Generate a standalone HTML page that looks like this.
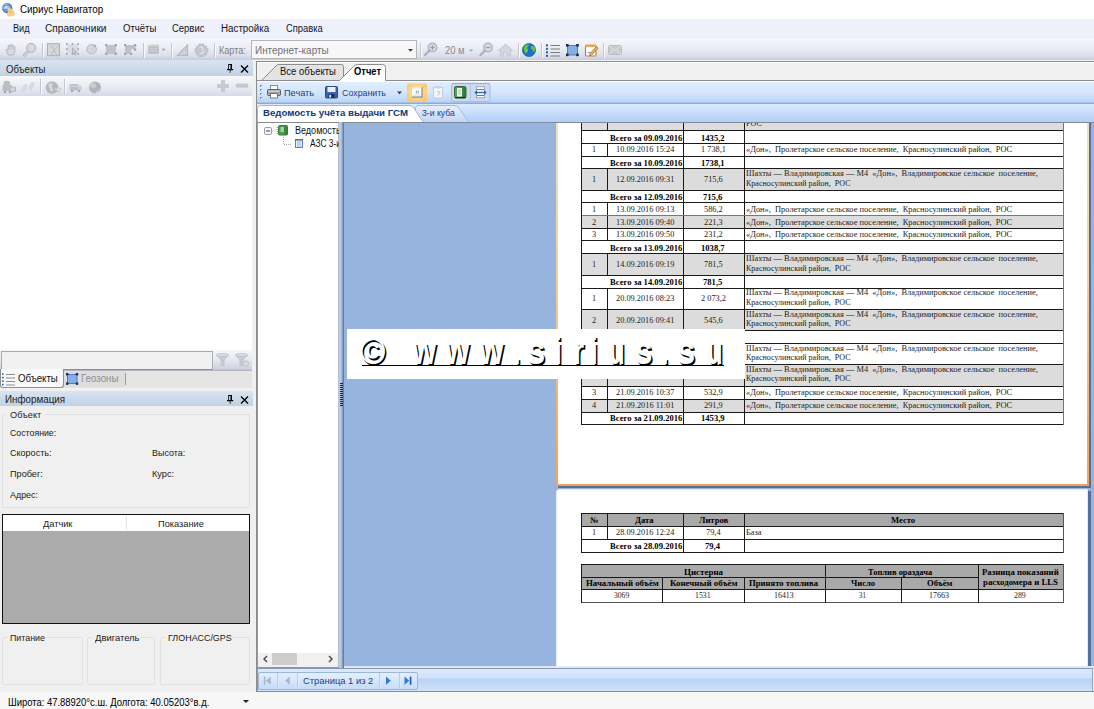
<!DOCTYPE html>
<html><head><meta charset="utf-8"><title>Сириус Навигатор</title>
<style>
*{box-sizing:border-box;margin:0;padding:0}
html,body{width:1094px;height:709px;overflow:hidden;background:#fff}
body{font-family:"Liberation Sans",sans-serif;font-size:11px;color:#000;position:relative}
.a{position:absolute}
.t{position:absolute;white-space:nowrap;line-height:12px;font-size:11px;letter-spacing:-0.2px}
svg{position:absolute;overflow:visible}
#title{left:0;top:0;width:1094px;height:19px;background:#fff}
#menu{left:0;top:19px;width:1094px;height:20px;background:#eef1fa}
#tb{left:0;top:39px;width:1094px;height:21px;background:linear-gradient(#f5f6fb 0,#eceef5 40%,#dde0ea 78%,#d1d5e2 92%,#c3c8d7 97%,#e6e9f0 100%)}
#bodybg{left:0;top:60px;width:1094px;height:649px;background:#f0f0f0}
.phead{background:linear-gradient(#d9e4f2,#c1d1e4);height:16px}
#ltb{left:0;top:76px;width:252px;height:20px;background:linear-gradient(#f8f9fc,#e9ebf3 55%,#d7dae6)}
#llist{left:0;top:96px;width:252px;height:254px;background:#fff}
#rframe{left:256px;top:61px;width:840px;height:631px;background:#f0f0f0;border:1px solid #8c8c8c}
#rtb{left:257px;top:81px;width:837px;height:23px;background:linear-gradient(#fff 0,#fff 1px,#dfedfe 1px,#d5e6fc 50%,#bcd5f6 90%,#7f9fcf 100%)}
#rsub{left:257px;top:104px;width:837px;height:18px;background:linear-gradient(#dbeaff 0,#b3cff6 100%)}
#tree{left:257px;top:123px;width:82px;height:544px;background:#fff;border-left:1px solid #97979c;border-right:1px solid #b9bdcc}
#split{left:339px;top:122px;width:5px;height:546px;background:linear-gradient(90deg,#b4cdec 0,#b4cdec 40%,#a3bbdf 40%,#a3bbdf 60%,#8a9cbb 60%,#8a9cbb 80%,#6c7c9b 80%)}
#view{left:344px;top:123px;width:750px;height:543px;background:#97b4df;overflow:hidden}
#nav{left:257px;top:668px;width:836px;height:23px;background:linear-gradient(#dbe9fd 0,#d0e2fa 42%,#b8d3f5 44%,#c3d9f7 72%,#d2e3fa 100%);border-top:1px solid #8a98b4;border-right:1px solid #8fa5c5}
.rt{position:absolute;font-family:"Liberation Serif",serif;font-size:7.4px;line-height:9px;white-space:nowrap;color:#222}
.rb{font-weight:bold;color:#000}
.hl{position:absolute;height:1px;background:#1a1a1a}
.vl{position:absolute;width:1px;background:#1a1a1a}
.gr{position:absolute;background:#dcdcdc}
.gh{position:absolute;background:#a9a9a9}
.lbl{position:absolute;font-size:11px;letter-spacing:-0.45px;white-space:nowrap;line-height:12px;color:#111}
.gb{position:absolute;border:1px solid #e1e1e1;border-radius:2px}
.wmc{position:absolute;font-weight:bold;font-size:32px;line-height:normal;color:#fff;white-space:pre;transform-origin:0 0}
</style></head><body>
<div class="a" id="title"></div><div class="a" id="menu"></div><div class="a" id="tb"></div><div class="a" id="bodybg"></div>
<svg style="left:1px;top:2px" width="15" height="15" viewBox="0 0 15 15"><defs><radialGradient id="tg" cx="40%" cy="40%" r="65%"><stop offset="0" stop-color="#d7e9fb"/><stop offset=".55" stop-color="#6fa3e0"/><stop offset="1" stop-color="#2f64b4"/></radialGradient></defs><circle cx="6.200" cy="6" r="5.200" fill="url(#tg)"/><path d="M2 4.500c2-1.500 5-2 7.500-.8M1.500 7.500c2 .8 4 .6 5.500-.2" stroke="#3f74c4" stroke-width="1" fill="none" opacity=".8"/><path d="M7 6.200c1-.8 2.200-.3 2.600.6l1.300.3c.8.200 1.300.9 1.500 1.700l1.100 2.300c.5 1-.2 2.200-1.500 2.500l-3.400.5c-1.500.1-2.500-.7-2.600-1.800-.1-1 .5-1.300 1-2 .4-.6-.2-1.600-.4-2.400-.2-.7-.1-1.200.4-1.700z" fill="#f3d394" stroke="#e2b560" stroke-width=".5"/><path d="M8.200 8.200l2.500 1.200M8.500 10.500l2.600.2" stroke="#e6a94a" stroke-width=".7" fill="none"/></svg>
<div class="t" style="left:19.60px;top:3.60px;font-size:10.3px;line-height:12px;letter-spacing:0;color:#000;transform-origin:0 0;transform:scaleX(0.9541);">Сириус Навигатор</div>
<div class="t" style="left:12.70px;top:22.70px;font-size:10px;line-height:12px;letter-spacing:0;color:#16161c;transform-origin:0 0;transform:scaleX(0.9120);">Вид</div>
<div class="t" style="left:44.70px;top:22.70px;font-size:10px;line-height:12px;letter-spacing:0;color:#16161c;transform-origin:0 0;transform:scaleX(1.0152);">Справочники</div>
<div class="t" style="left:122.60px;top:22.70px;font-size:10px;line-height:12px;letter-spacing:0;color:#16161c;transform-origin:0 0;transform:scaleX(0.9542);">Отчёты</div>
<div class="t" style="left:171.90px;top:22.70px;font-size:10px;line-height:12px;letter-spacing:0;color:#16161c;transform-origin:0 0;transform:scaleX(0.9462);">Сервис</div>
<div class="t" style="left:220.70px;top:22.70px;font-size:10px;line-height:12px;letter-spacing:0;color:#16161c;transform-origin:0 0;transform:scaleX(0.9771);">Настройка</div>
<div class="t" style="left:285.50px;top:22.70px;font-size:10px;line-height:12px;letter-spacing:0;color:#16161c;transform-origin:0 0;transform:scaleX(0.9381);">Справка</div>
<svg style="left:0;top:39px" width="640" height="21" viewBox="0 39 640 21"><path d="M8.300 55C7.800 53 6.300 51.600 6.300 50.200C6.300 49 7.600 48.900 8.200 50V46.200C8.200 45.200 9.600 45.200 9.600 46.200L9.800 45.200C9.800 44.200 11.300 44.200 11.300 45.200L11.600 45.500C11.600 44.600 13 44.700 13 45.700L13.300 46.500C13.500 45.800 14.800 46 14.800 47V51C14.800 53 13.800 53.600 13.600 55Z" fill="#d9d9de" stroke="#a8a8b0" stroke-width=".8"/><path d="M9.700 46.500v3M11.400 46v3.500M13.100 46.800v2.800" stroke="#bcbcc4" stroke-width=".6"/><path d="M28.200 51l-3.600 4" stroke="#b0b0b8" stroke-width="3.200" stroke-linecap="round"/><path d="M28.200 51l-3.600 4" stroke="#d8d8dd" stroke-width="1.600" stroke-linecap="round"/><circle cx="31.200" cy="47.900" r="4.500" fill="#d9d9de" stroke="#adadb6" stroke-width="1"/><rect x="47.500" y="43.700" width="12" height="12" fill="#d5d7db" stroke="#adadb4"/><path d="M50.500 45l3.500 5-2.500 5M54 50l4.500-4.500M54 50l3 5" stroke="#bcbec6" fill="none"/><rect x="67" y="44" width="11.500" height="10" fill="#dcdde2"/><g fill="#9b9ca6"><rect x="66" y="43.200" width="1.600" height="1.600"/><rect x="71.700" y="43.200" width="1.600" height="1.600"/><rect x="77.400" y="43.200" width="1.600" height="1.600"/><rect x="66" y="48.200" width="1.600" height="1.600"/><rect x="77.400" y="48.200" width="1.600" height="1.600"/><rect x="66" y="53.200" width="1.600" height="1.600"/><rect x="71.700" y="53.200" width="1.600" height="1.600"/><rect x="77.400" y="53.200" width="1.600" height="1.600"/></g><path d="M72.500 48l4.500 4.300-2 .2 1.100 2.300-1.100.5-1.100-2.300-1.400 1.300z" fill="#c9cad0" stroke="#9d9ea8" stroke-width=".6"/><circle cx="91.600" cy="49.200" r="4.800" fill="#d6d6da" stroke="#babac2"/><path d="M91.600 49.200l3.200-3.200" stroke="#c2c2ca"/><circle cx="95" cy="45.800" r="1.100" fill="#a9a9b2"/><rect x="106" y="45" width="10" height="9" fill="#c2c3ca"/><g fill="#a6a7b0"><rect x="105" y="44" width="2.400" height="2.400"/><rect x="114.600" y="44" width="2.400" height="2.400"/><rect x="105" y="52.600" width="2.400" height="2.400"/><rect x="114.600" y="52.600" width="2.400" height="2.400"/></g><path d="M125 45h10.500v4.500H131v4.500h-6z" fill="#c0c1c8"/><g fill="#a4a5ae"><rect x="124" y="44" width="2.200" height="2.200"/><rect x="134" y="44" width="2.200" height="2.200"/><rect x="134" y="48.500" width="2.200" height="2.200"/><rect x="124" y="52.800" width="2.200" height="2.200"/><rect x="130" y="52.800" width="2.200" height="2.200"/></g><rect x="148" y="45.500" width="11" height="8.500" rx="1" fill="#c1c2c9"/><rect x="150" y="44.500" width="9" height="2" fill="#d0d1d7"/><path d="M149 48.500h9M149 51h9" stroke="#cfd0d6" stroke-width=".7"/><path d="M161.500 48.800h4l-2 2.300z" fill="#9da0ac"/><path d="M177.500 55.500l10-10.500v10.500z" fill="#d0d3db" stroke="#b5b8c2" stroke-width="1.200"/><path d="M182 53.500l3.500-3.700v3.700z" fill="#e4e6ec" stroke="#b5b8c2" stroke-width=".6"/><path d="M199 44h5v2h2.500v2.500H208v4h-1.500V55H204v1.500h-5V55h-2.500v-2.500H195v-4h1.500V46H199z" fill="#c3c6cf" stroke="#b3b6c0" stroke-width=".6"/><path d="M199.500 47.500c2.500-1 4 0 3 1.500s2.500 1.500 1 3.500-3 1-4 .500" stroke="#dfe1e8" stroke-width="1.300" fill="none"/><circle cx="432.500" cy="47.500" r="4.300" fill="#d6d9e1" stroke="#adb0bb" stroke-width="1.300"/><path d="M429.500 50.500l-4.500 4.500" stroke="#adb0bb" stroke-width="2.400" stroke-linecap="round"/><path d="M430.300 47.500h4.400M432.500 45.300v4.400" stroke="#9a9da9" stroke-width="1.200"/><path d="M469 49.500h4.200l-2.100 2.300z" fill="#a6a9b4"/><circle cx="488" cy="47.500" r="4.300" fill="#d6d9e1" stroke="#adb0bb" stroke-width="1.300"/><path d="M485 50.500l-4.500 4.500" stroke="#adb0bb" stroke-width="2.400" stroke-linecap="round"/><path d="M485.800 47.500h4.400" stroke="#9a9da9" stroke-width="1.200"/><path d="M498.500 50.500l7-6.500 7 6.500h-2v5.500h-3.300v-4h-3.400v4h-3.300v-5.500z" fill="#d3d6de" stroke="#c0c3cc" stroke-width=".8"/><circle cx="529" cy="50" r="6.600" fill="#1f6fc2"/><circle cx="529" cy="50" r="6.600" fill="none" stroke="#1558a0" stroke-width=".6"/><path d="M524 47c1-2.500 3.500-3 5-2.300-.2 1.500-1.700 1.500-1.700 3s1.200 1.600.6 3.300-1.400 1.200-1.900 2.800c-1.600-1.300-2.600-4.300-2-6.800z" fill="#63c83c"/><path d="M531 46.500c1.500-1 3.500-.2 4 1.500.3 1.800-.3 3.300-1.200 4.500-.5-1-.3-2-1.300-2.600s-2-1.700-1.500-3.400z" fill="#63c83c"/><g fill="#2c5fb0"><rect x="546" y="44.300" width="2" height="2"/><rect x="546" y="47.800" width="2" height="2"/><rect x="546" y="51.300" width="2" height="2"/><rect x="546" y="54.800" width="2" height="2"/></g><g stroke="#7d7d7d" stroke-width="1"><path d="M550.500 45.500h9.500M550.500 49h9.500M550.500 52.500h9.500M550.500 56h9.500"/></g><rect x="567.500" y="45.500" width="10" height="9.500" fill="#86aee6" stroke="#4b7dcc"/><g fill="#1c2b4a"><rect x="566" y="44" width="2.600" height="2.600"/><rect x="576.200" y="44" width="2.600" height="2.600"/><rect x="566" y="53.600" width="2.600" height="2.600"/><rect x="576.200" y="53.600" width="2.600" height="2.600"/></g><rect x="585.500" y="45.500" width="10.500" height="10.500" rx="1" fill="#fbfbfb" stroke="#b9864a" stroke-width="1.200"/><rect x="585.500" y="44.500" width="10.500" height="2.400" fill="#e9a54a"/><path d="M590 53.500l6.500-7 1.700 1.600-6.500 7-2.300.700z" fill="#f0b050" stroke="#a86a26" stroke-width=".7"/><path d="M587.500 52.500h3" stroke="#999"/><rect x="608.500" y="45.500" width="13" height="9" rx="1" fill="#cbcbce" stroke="#bdbdc2"/><path d="M609 46l6 4.500 6-4.500M609 54l4.500-4M621 54l-4.500-4" stroke="#e4e4e8" fill="none" stroke-width="1"/></svg>
<div class="a" style="left:42px;top:43px;width:1px;height:15px;background:#c3c6d1"></div><div class="a" style="left:43px;top:43px;width:1px;height:15px;background:#fbfbfd"></div>
<div class="a" style="left:143px;top:43px;width:1px;height:15px;background:#c3c6d1"></div><div class="a" style="left:144px;top:43px;width:1px;height:15px;background:#fbfbfd"></div>
<div class="a" style="left:171px;top:43px;width:1px;height:15px;background:#c3c6d1"></div><div class="a" style="left:172px;top:43px;width:1px;height:15px;background:#fbfbfd"></div>
<div class="a" style="left:214px;top:43px;width:1px;height:15px;background:#c3c6d1"></div><div class="a" style="left:215px;top:43px;width:1px;height:15px;background:#fbfbfd"></div>
<div class="a" style="left:420px;top:43px;width:1px;height:15px;background:#c3c6d1"></div><div class="a" style="left:421px;top:43px;width:1px;height:15px;background:#fbfbfd"></div>
<div class="a" style="left:518px;top:43px;width:1px;height:15px;background:#c3c6d1"></div><div class="a" style="left:519px;top:43px;width:1px;height:15px;background:#fbfbfd"></div>
<div class="a" style="left:541px;top:43px;width:1px;height:15px;background:#c3c6d1"></div><div class="a" style="left:542px;top:43px;width:1px;height:15px;background:#fbfbfd"></div>
<div class="a" style="left:603px;top:43px;width:1px;height:15px;background:#c3c6d1"></div><div class="a" style="left:604px;top:43px;width:1px;height:15px;background:#fbfbfd"></div>
<div class="t" style="left:219.30px;top:44.70px;font-size:10px;line-height:12px;letter-spacing:0;color:#7d7d84;transform-origin:0 0;transform:scaleX(0.9107);">Карта:</div>
<div class="a" style="left:251px;top:40px;width:166px;height:19px;background:#f7f7f7;border:1px solid #b5b5b5"></div>
<div class="t" style="left:254.90px;top:44.70px;font-size:10px;line-height:12px;letter-spacing:0;color:#6f6f74;transform-origin:0 0;transform:scaleX(0.9915);">Интернет-карты</div>
<svg style="left:408px;top:49px" width="5" height="3" viewBox="0 0 5 3"><path d="M0 0h5L2.500 2.800z" fill="#444"/></svg>
<div class="t" style="left:445.20px;top:44.70px;font-size:10px;line-height:12px;letter-spacing:0;color:#8a8a92;transform-origin:0 0;transform:scaleX(0.9434);">20 м</div>
<div class="a phead" style="left:0;top:60px;width:253px"></div>
<div class="t" style="left:5.70px;top:63.70px;font-size:10px;line-height:12px;letter-spacing:0;color:#1b1b1b;transform-origin:0 0;transform:scaleX(0.9578);">Объекты</div>
<svg style="left:227px;top:64px" width="7" height="9" viewBox="0 0 7 9"><path d="M1.200 0h3.800v5H6.200v1.200H0V5h1.200z" fill="#000"/><rect x="2.200" y="1" width="1.200" height="4" fill="#fff"/><rect x="2.700" y="6" width="1" height="2.800" fill="#333"/></svg>
<svg style="left:240px;top:65px" width="9" height="8" viewBox="0 0 9 8"><path d="M1 .5l7 7M8 .5l-7 7" stroke="#000" stroke-width="1.300"/></svg>
<div class="a" id="ltb"></div>
<svg style="left:0;top:76px" width="253" height="21" viewBox="0 76 253 21"><path d="M3.500 83c0-3 6.500-3 6.500 0v2h2v6H2.500v-6h1z" fill="#bdbdc4"/><rect x="10" y="87" width="5.500" height="4.500" fill="#d3d3d9" stroke="#b4b4bb" stroke-width=".8"/><circle cx="5" cy="92" r="1.300" fill="#a5a5ad"/><circle cx="10" cy="92" r="1.300" fill="#a5a5ad"/><g fill="#d9dae1"><ellipse cx="24.500" cy="88" rx="2.300" ry="4.300" transform="rotate(25 24.500 88)"/><ellipse cx="31.500" cy="86" rx="2.300" ry="4.300" transform="rotate(25 31.500 86)"/></g><circle cx="52" cy="87.500" r="6.300" fill="#b7b8be"/><path d="M49 84c1.500-1.600 3-1.200 3.500 0s-1 2-.500 3.300 1.700 1.400 1.200 3-2.300 1.300-3-.3-2.300-3.600-1.200-6z" fill="#d8d9de"/><path d="M54.500 88.500h3v-2h1.500v2h2v1.500h-2v2H57.500v-2h-3z" fill="#e8e9ee" stroke="#a9aab1" stroke-width=".4"/><rect x="69.500" y="84" width="9" height="6.500" rx="1" fill="#bfc0c6"/><path d="M78.500 85.500h2.500l1 2v3h-3.500z" fill="#cfd0d6"/><path d="M70 86.200h8" stroke="#dcdde2" stroke-width="1"/><circle cx="72" cy="91" r="1.200" fill="#a9aab1"/><circle cx="79" cy="91" r="1.200" fill="#a9aab1"/><circle cx="95" cy="87.500" r="6" fill="#b3b4ba"/><circle cx="93" cy="85.500" r="3" fill="#c9cad0"/><path d="M96 91l1 2 2.500-3.500" stroke="#d9dadf" stroke-width="1" fill="none"/><path d="M221.500 80.500h3v4h4v3h-4v4h-3v-4h-4v-3h4z" fill="#c9cad1" stroke="#bbbcc4" stroke-width=".6"/><rect x="236" y="84" width="12" height="3.200" rx="1" fill="#c9cad1" stroke="#bbbcc4" stroke-width=".6"/></svg>
<div class="a" style="left:40px;top:79px;width:1px;height:15px;background:#c3c6d1"></div><div class="a" style="left:41px;top:79px;width:1px;height:15px;background:#fbfbfd"></div>
<div class="a" style="left:64px;top:79px;width:1px;height:15px;background:#c3c6d1"></div><div class="a" style="left:65px;top:79px;width:1px;height:15px;background:#fbfbfd"></div>
<div class="a" id="llist"></div>
<div class="a" style="left:0;top:350px;width:252px;height:21px;background:linear-gradient(#f6f7fb,#e4e7ef 50%,#cdd2df 90%,#b9bdcb 96%,#a9a9ae 100%)"></div>
<div class="a" style="left:1px;top:351px;width:212px;height:19px;background:#f1f1f1;border:1px solid #a9a9a9;border-right-color:#b0b0b0;border-bottom-color:#8f8f8f"></div>
<svg style="left:213px;top:350px" width="40" height="20" viewBox="213 350 40 20"><path d="M216.500 355h12l-4.500 5v5.500h-3v-5.500z" fill="#cbccd2" stroke="#b9bac1" stroke-width=".7"/><ellipse cx="222.500" cy="355" rx="6" ry="1.600" fill="#dadbe0" stroke="#b9bac1" stroke-width=".6"/><path d="M235.500 355h12l-4.500 5v5.500h-3v-5.500z" fill="#cbccd2" stroke="#b9bac1" stroke-width=".7"/><ellipse cx="241.500" cy="355" rx="6" ry="1.600" fill="#dadbe0" stroke="#b9bac1" stroke-width=".6"/><circle cx="246" cy="363.500" r="2.600" fill="#dcdde2" stroke="#b4b5bc" stroke-width=".7"/></svg>
<div class="a" style="left:0;top:371px;width:252px;height:17px;background:#e5e5e5"></div>
<div class="a" style="left:64px;top:371px;width:61px;height:16px;background:#dddddd"></div>
<div class="a" style="left:0;top:369px;width:64px;height:19px;background:#fafafa;border:1px solid #8e8e8e;border-top:0;border-radius:0 0 3px 3px"></div>
<svg style="left:0;top:370px" width="130" height="19" viewBox="0 370 130 19"><g fill="#2c5fb0"><rect x="2" y="373.300" width="1.600" height="1.600"/><rect x="2" y="376.800" width="1.600" height="1.600"/><rect x="2" y="380.300" width="1.600" height="1.600"/><rect x="2" y="383.800" width="1.600" height="1.600"/></g><path d="M6 374.500h9M6 378h9M6 381.500h9M6 385h9" stroke="#8a8a8a"/><rect x="67.500" y="374.500" width="9.500" height="9" fill="#86aee6" stroke="#4b7dcc"/><g fill="#1c2b4a"><rect x="66" y="373" width="2.400" height="2.400"/><rect x="75.800" y="373" width="2.400" height="2.400"/><rect x="66" y="382.400" width="2.400" height="2.400"/><rect x="75.800" y="382.400" width="2.400" height="2.400"/></g><path d="M125.500 373v12" stroke="#9a9a9a"/></svg>
<div class="t" style="left:17.80px;top:372.69px;font-size:10px;line-height:12px;letter-spacing:0;color:#111;transform-origin:0 0;transform:scaleX(0.9651);">Объекты</div>
<div class="t" style="left:81.40px;top:372.69px;font-size:10px;line-height:12px;letter-spacing:0;color:#8d8d8d;transform-origin:0 0;transform:scaleX(0.9714);">Геозоны</div>
<div class="a phead" style="left:0;top:391px;width:253px;height:15px"></div>
<div class="t" style="left:5.30px;top:393.69px;font-size:10px;line-height:12px;letter-spacing:0;color:#1b1b1b;transform-origin:0 0;transform:scaleX(0.9816);">Информация</div>
<svg style="left:227px;top:395px" width="7" height="9" viewBox="0 0 7 9"><path d="M1.200 0h3.800v5H6.200v1.200H0V5h1.200z" fill="#000"/><rect x="2.200" y="1" width="1.200" height="4" fill="#fff"/><rect x="2.700" y="6" width="1" height="2.800" fill="#333"/></svg>
<svg style="left:240px;top:395.5px" width="9" height="8" viewBox="0 0 9 8"><path d="M1 .5l7 7M8 .5l-7 7" stroke="#000" stroke-width="1.300"/></svg>
<div class="gb" style="left:2px;top:414px;width:248px;height:94px"></div>
<div class="a" style="left:7px;top:408px;width:37px;height:12px;background:#f0f0f0"></div>
<div class="t" style="left:9.70px;top:408.76px;font-size:9.8px;line-height:12px;letter-spacing:0;color:#1a1a1a;transform-origin:0 0;transform:scaleX(0.9379);">Объект</div>
<div class="t" style="left:9.70px;top:426.76px;font-size:9.8px;line-height:12px;letter-spacing:0;color:#1a1a1a;transform-origin:0 0;transform:scaleX(0.8949);">Состояние:</div>
<div class="t" style="left:9.70px;top:446.76px;font-size:9.8px;line-height:12px;letter-spacing:0;color:#1a1a1a;transform-origin:0 0;transform:scaleX(0.9213);">Скорость:</div>
<div class="t" style="left:9.70px;top:467.76px;font-size:9.8px;line-height:12px;letter-spacing:0;color:#1a1a1a;transform-origin:0 0;transform:scaleX(0.9320);">Пробег:</div>
<div class="t" style="left:9.70px;top:488.76px;font-size:9.8px;line-height:12px;letter-spacing:0;color:#1a1a1a;transform-origin:0 0;transform:scaleX(0.9097);">Адрес:</div>
<div class="t" style="left:152.30px;top:446.76px;font-size:9.8px;line-height:12px;letter-spacing:0;color:#1a1a1a;transform-origin:0 0;transform:scaleX(0.9126);">Высота:</div>
<div class="t" style="left:152.30px;top:467.76px;font-size:9.8px;line-height:12px;letter-spacing:0;color:#1a1a1a;transform-origin:0 0;transform:scaleX(0.9333);">Курс:</div>
<div class="a" style="left:2px;top:514px;width:248px;height:110px;background:#ababab;border:1px solid #111"></div>
<div class="a" style="left:3px;top:515px;width:246px;height:16px;background:#fff"></div>
<div class="a" style="left:126px;top:516px;width:1px;height:14px;background:#e3e3e3"></div>
<div class="t" style="left:43.20px;top:517.76px;font-size:9.8px;line-height:12px;letter-spacing:0;color:#1a1a1a;transform-origin:0 0;transform:scaleX(0.9414);">Датчик</div>
<div class="t" style="left:157.70px;top:517.76px;font-size:9.8px;line-height:12px;letter-spacing:0;color:#1a1a1a;transform-origin:0 0;transform:scaleX(0.9420);">Показание</div>
<div class="gb" style="left:2px;top:637px;width:81px;height:48px"></div>
<div class="a" style="left:8px;top:632px;width:38px;height:12px;background:#f0f0f0"></div>
<div class="t" style="left:10.00px;top:631.76px;font-size:9.8px;line-height:12px;letter-spacing:0;color:#1a1a1a;transform-origin:0 0;transform:scaleX(0.9022);">Питание</div>
<div class="gb" style="left:87px;top:637px;width:68px;height:48px"></div>
<div class="a" style="left:93px;top:632px;width:48px;height:12px;background:#f0f0f0"></div>
<div class="t" style="left:95.40px;top:631.76px;font-size:9.8px;line-height:12px;letter-spacing:0;color:#1a1a1a;transform-origin:0 0;transform:scaleX(0.9624);">Двигатель</div>
<div class="gb" style="left:160px;top:637px;width:90px;height:48px"></div>
<div class="a" style="left:165px;top:632px;width:67px;height:12px;background:#f0f0f0"></div>
<div class="t" style="left:167.80px;top:631.76px;font-size:9.8px;line-height:12px;letter-spacing:0;color:#1a1a1a;transform-origin:0 0;transform:scaleX(0.9143);">ГЛОНАСС/GPS</div>
<div class="a" style="left:0;top:692px;width:1094px;height:17px;background:#f7f7f7"></div>
<div class="t" style="left:7.70px;top:696.70px;font-size:10px;line-height:12px;letter-spacing:0;color:#000;transform-origin:0 0;transform:scaleX(0.9445);">Широта: 47.88920°с.ш. Долгота: 40.05203°в.д.</div>
<svg style="left:243px;top:700px" width="6" height="3" viewBox="0 0 6 3"><path d="M0 0h6L3 3z" fill="#222"/></svg>
<div class="a" id="rframe"></div>
<div class="a" style="left:257px;top:62px;width:837px;height:1px;background:#fff"></div>
<div class="a" style="left:257px;top:80px;width:837px;height:1px;background:#8c8c8c"></div>
<svg style="left:257px;top:62px" width="140" height="20" viewBox="257 62 140 20"><path d="M261.500 80.500L277.500 64.500H341.500Q343.500 64.500 343.500 66.500V80.500z" fill="#e3e3e3" stroke="#8c8c8c"/><path d="M339.500 80.500L353.500 66.500Q355.500 64.500 357.500 64.500H382.500Q385.500 64.500 385.500 67.500V81.500H339z" fill="#ffffff"/><path d="M339.500 80.500L353.500 66.500Q355.500 64.500 357.500 64.500H382.500Q385.500 64.500 385.500 67.500V80.500" fill="none" stroke="#8c8c8c"/></svg>
<div class="t" style="left:280.40px;top:65.70px;font-size:10px;line-height:12px;letter-spacing:0;color:#111;transform-origin:0 0;transform:scaleX(0.9452);">Все объекты</div>
<div class="t" style="left:354.40px;top:65.70px;font-size:10px;line-height:12px;letter-spacing:0;font-weight:bold;color:#000;transform-origin:0 0;transform:scaleX(0.9372);">Отчет</div>
<div class="a" id="rtb"></div>
<div class="a" id="rsub"></div>
<svg style="left:257px;top:81px" width="260" height="23" viewBox="257 81 260 23"><rect x="260" y="85" width="2" height="2" fill="#6f93c6"/><rect x="261" y="86" width="1" height="1" fill="#fff"/><rect x="260" y="89" width="2" height="2" fill="#6f93c6"/><rect x="261" y="90" width="1" height="1" fill="#fff"/><rect x="260" y="93" width="2" height="2" fill="#6f93c6"/><rect x="261" y="94" width="1" height="1" fill="#fff"/><rect x="260" y="97" width="2" height="2" fill="#6f93c6"/><rect x="261" y="98" width="1" height="1" fill="#fff"/><rect x="270.500" y="85.500" width="7" height="4" fill="#fff" stroke="#777" stroke-width=".8"/><rect x="267.500" y="89.500" width="13" height="6" rx="1" fill="#a4a4aa" stroke="#55555b" stroke-width=".9"/><rect x="270.500" y="93.500" width="7" height="4.500" fill="#fff" stroke="#5d5d63" stroke-width=".8"/><rect x="268.500" y="90.500" width="11" height="1.300" fill="#d4d4d8"/><rect x="277" y="92.200" width="1.500" height="1.200" fill="#7fd06a"/><rect x="325.500" y="86.500" width="12" height="11.500" rx="1" fill="#3a63b8" stroke="#23407f" stroke-width=".9"/><rect x="327.500" y="87" width="8" height="5" fill="#e9eef8"/><rect x="328.500" y="94" width="6" height="4" fill="#1c2f66"/><rect x="329.300" y="94.800" width="1.800" height="2.800" fill="#dfe6f5"/><path d="M397 91.500h5l-2.500 2.700z" fill="#2a3a5c"/><defs><radialGradient id="og" cx="50%" cy="45%" r="65%"><stop offset="0" stop-color="#fee6b6"/><stop offset="1" stop-color="#f9c468"/></radialGradient><linearGradient id="gb" x1="0" y1="0" x2="1" y2="0"><stop offset="0" stop-color="#58a85a"/><stop offset="1" stop-color="#2f7a36"/></linearGradient></defs><rect x="407" y="83.500" width="20" height="18" rx="2" fill="url(#og)"/><rect x="412" y="87" width="10.500" height="10.500" fill="#6f7684"/><rect x="412" y="87" width="9.500" height="9.500" fill="#fdfdfd"/><rect x="412" y="87" width="9.500" height="1.600" fill="#e3e6ec"/><path d="M416.300 90.500v3M418.300 90.500v3" stroke="#8b93a5" stroke-width="1"/><path d="M413.500 95h6.500" stroke="#c8ccd6" stroke-width=".8"/><rect x="433.500" y="87.500" width="9" height="10.500" fill="#f6f7f9" stroke="#c3c8d2" stroke-width=".9"/><rect x="435.500" y="86" width="5" height="2.400" rx="1" fill="#cfd3db"/><rect x="451.500" y="83.500" width="38.500" height="18" rx="2" fill="#cbdaf0" stroke="#a9bddb"/><path d="M452.500 83.500h36.500" stroke="#8fa6c8" stroke-dasharray="1.500 1"/><path d="M470.500 84.500v16" stroke="#b4c6e0"/><rect x="454.500" y="86.500" width="11.500" height="11.500" rx="1.500" fill="url(#gb)" stroke="#2c5f32" stroke-width=".9"/><rect x="457" y="88" width="5" height="8.500" fill="#f4f7f3"/><path d="M458 90h3M458 92h3M458 94h3" stroke="#9aa89b" stroke-width=".8"/><path d="M455 97.600h10.500" stroke="#1c2a20" stroke-width="1.200"/><rect x="476.500" y="86.800" width="8" height="11" fill="#fdfdfd" stroke="#8e97a8" stroke-width=".8"/><path d="M477 89.500h7M477 95.500h7" stroke="#6e7686" stroke-width="1.200"/><path d="M476 92.500h9" stroke="#3d74c2" stroke-width="1.600"/><path d="M474.300 92.500l2.700-2.500v5zM486.700 92.500l-2.700-2.500v5z" fill="#2f68b8"/></svg>
<div class="t" style="left:436px;top:89.5px;font-size:8px;color:#a6acb8;letter-spacing:0;line-height:8px">?</div>
<div class="t" style="left:283.90px;top:87.09px;font-size:8.8px;line-height:12px;letter-spacing:0;color:#15428b;transform-origin:0 0;transform:scaleX(1.0441);">Печать</div>
<div class="t" style="left:341.90px;top:87.09px;font-size:8.8px;line-height:12px;letter-spacing:0;color:#15428b;transform-origin:0 0;transform:scaleX(1.0062);">Сохранить</div>
<svg style="left:257px;top:104px" width="240" height="19" viewBox="257 104 240 19"><defs><linearGradient id="st2" x1="0" y1="0" x2="0" y2="1"><stop offset="0" stop-color="#e6effc"/><stop offset="1" stop-color="#c2d6f4"/></linearGradient></defs><path d="M415.500 122.500V108Q415.500 105.500 418 105.500H454Q457.500 105.500 459 108L469 122.500z" fill="url(#st2)" stroke="#a3bbdf"/><path d="M257.500 123V108.500Q257.500 105.500 260.500 105.500H409Q412.500 105.500 414 108L420.500 118.500Q422.500 122.500 426 122.500V123z" fill="#fff" stroke="#a9b4c6"/></svg>
<div class="t" style="left:262.50px;top:107.09px;font-size:8.8px;line-height:12px;letter-spacing:0;font-weight:bold;color:#0f3a80;transform-origin:0 0;transform:scaleX(1.0989);">Ведомость учёта выдачи ГСМ</div>
<div class="t" style="left:421.60px;top:107.09px;font-size:8.8px;line-height:12px;letter-spacing:0;color:#15428b;transform-origin:0 0;transform:scaleX(0.9860);">3-и куба</div>
<div class="a" style="left:257px;top:122px;width:837px;height:1px;background:#7f8a9c"></div>
<div class="a" style="left:257px;top:122px;width:158px;height:1px;background:#8a8a8a"></div>
<div class="a" id="tree"></div>
<svg style="left:257px;top:123px" width="82" height="40" viewBox="257 123 82 40"><rect x="264.500" y="127.500" width="7" height="7" rx="1.200" fill="#f4f4f6" stroke="#9a9aa2"/><path d="M266 131h4" stroke="#3a4a8a"/><path d="M272.500 131h4" stroke="#aaa" stroke-dasharray="1 1"/><rect x="278.500" y="125.500" width="9" height="9.500" rx="1" fill="#4f9e52" stroke="#2f6a33" stroke-width=".9"/><rect x="280.500" y="127" width="3.500" height="5" fill="#9fd39b"/><rect x="284" y="126.500" width="3" height="8" fill="#3c8440"/><path d="M276.500 127.500h2M276.500 129.500h2M276.500 131.500h2M276.500 133.500h2" stroke="#888" stroke-width=".7"/><path d="M283.500 137v7.500h8" stroke="#aaa" stroke-dasharray="1 1" fill="none"/><rect x="295.500" y="139.500" width="7" height="8" fill="#eef3fb" stroke="#4f74b4" stroke-width=".9"/><path d="M297 142h4M297 144h4M297 146h4" stroke="#7fa0d6" stroke-width=".8"/><path d="M295.500 140h7" stroke="#3f62a0" stroke-width="1"/></svg>
<div class="a" style="left:257px;top:123px;width:82px;height:30px;overflow:hidden"><div class="t" style="left:37.80px;top:1.69px;font-size:10px;line-height:12px;letter-spacing:0;color:#111;transform-origin:0 0;transform:scaleX(0.9025);">Ведомость учёта</div><div class="t" style="left:52.90px;top:14.70px;font-size:10px;line-height:12px;letter-spacing:0;color:#111;transform-origin:0 0;transform:scaleX(0.8382);">АЗС 3-и куба</div></div>
<div class="a" style="left:258px;top:653px;width:80px;height:14px;background:#f0f0f0"></div>
<div class="a" style="left:272px;top:653px;width:25px;height:12px;background:#cdcdcd"></div>
<svg style="left:257px;top:653px" width="82" height="14" viewBox="257 653 82 14"><path d="M267 656l-3 3 3 3M329 656l3 3-3 3" stroke="#444" stroke-width="1.400" fill="none"/></svg>
<div class="a" style="left:257px;top:667px;width:87px;height:1px;background:#8a95a8"></div>
<div class="a" id="split"></div>
<div class="a" style="left:344px;top:666px;width:750px;height:2px;background:#e2e8f2"></div>
<svg style="left:339px;top:380px" width="5" height="30" viewBox="339 380 5 30"><rect x="340" y="383" width="3" height="1" fill="#222"/><rect x="340" y="385" width="3" height="1" fill="#222"/><rect x="340" y="387" width="3" height="1" fill="#222"/><rect x="340" y="389" width="3" height="1" fill="#222"/><rect x="340" y="391" width="3" height="1" fill="#222"/><rect x="340" y="393" width="3" height="1" fill="#222"/><rect x="340" y="395" width="3" height="1" fill="#222"/><rect x="340" y="397" width="3" height="1" fill="#222"/><rect x="340" y="399" width="3" height="1" fill="#222"/><rect x="340" y="401" width="3" height="1" fill="#222"/><rect x="340" y="403" width="3" height="1" fill="#222"/><rect x="340" y="405" width="3" height="1" fill="#222"/></svg>
<div class="a" id="view">
<div class="a" style="left:214px;top:-10px;width:533px;height:375px;background:#546f9f"></div>
<div class="a" style="left:212px;top:-10px;width:533px;height:373px;background:#fff;border:2px solid #f3a04b;border-image:linear-gradient(#f2e2bf 0,#f3cf98 45%,#f2a352 100%) 2"></div>
<div class="a" style="left:214px;top:368px;width:533px;height:300px;background:#546f9f"></div>
<div class="a" style="left:212px;top:366px;width:532px;height:300px;background:#fff;border:1px solid #e3ebf7;border-radius:3px 0 0 0"></div>
<div class="gr" style="left:237px;top:-13px;width:482px;height:20px"></div>
<div class="t" style="left:401.50px;top:-4.87px;font-size:8.5px;line-height:10px;letter-spacing:0;font-family:'Liberation Serif',serif;color:#1c1c1c;transform-origin:0 0;transform:scaleX(0.9377);white-space:pre;">РОС</div>
<div class="vl" style="left:263px;top:-14px;height:22px;background:#1a1a1a"></div>
<div class="vl" style="left:339px;top:-14px;height:22px;background:#1a1a1a"></div>
<div class="vl" style="left:400px;top:-14px;height:22px;background:#1a1a1a"></div>
<div class="hl" style="left:237px;top:7px;width:483px;background:#1a1a1a"></div>
<div class="t" style="left:265.82px;top:10.13px;font-size:8.5px;line-height:10px;letter-spacing:0;font-family:'Liberation Serif',serif;font-weight:bold;color:#000;transform-origin:0 0;transform:scaleX(1.0140);white-space:pre;">Всего за 09.09.2016</div>
<div class="t" style="left:356.77px;top:10.13px;font-size:8.5px;line-height:10px;letter-spacing:0;font-family:'Liberation Serif',serif;font-weight:bold;color:#000;transform-origin:0 0;transform:scaleX(1.0120);white-space:pre;">1435,2</div>
<div class="vl" style="left:339px;top:7px;height:14px;background:#1a1a1a"></div>
<div class="vl" style="left:400px;top:7px;height:14px;background:#1a1a1a"></div>
<div class="hl" style="left:237px;top:20px;width:483px;background:#1a1a1a"></div>
<div class="t" style="left:248.12px;top:21.13px;font-size:8.5px;line-height:10px;letter-spacing:0;font-family:'Liberation Serif',serif;color:#1c1c1c;transform-origin:0 0;transform:scaleX(0.9780);white-space:pre;">1</div>
<div class="t" style="left:271.70px;top:21.13px;font-size:8.5px;line-height:10px;letter-spacing:0;font-family:'Liberation Serif',serif;color:#1c1c1c;transform-origin:0 0;transform:scaleX(0.9776);white-space:pre;">10.09.2016 15:24</div>
<div class="t" style="left:356.73px;top:21.13px;font-size:8.5px;line-height:10px;letter-spacing:0;font-family:'Liberation Serif',serif;color:#1c1c1c;transform-origin:0 0;transform:scaleX(0.9780);white-space:pre;">1 738,1</div>
<div class="t" style="left:401.50px;top:21.13px;font-size:8.5px;line-height:10px;letter-spacing:0;font-family:'Liberation Serif',serif;color:#1c1c1c;transform-origin:0 0;transform:scaleX(0.9861);white-space:pre;">«Дон»,  Пролетарское сельское поселение,  Красносулинский район,  РОС</div>
<div class="vl" style="left:263px;top:20px;height:14px;background:#1a1a1a"></div>
<div class="vl" style="left:339px;top:20px;height:14px;background:#1a1a1a"></div>
<div class="vl" style="left:400px;top:20px;height:14px;background:#1a1a1a"></div>
<div class="hl" style="left:237px;top:33px;width:483px;background:#1a1a1a"></div>
<div class="t" style="left:265.82px;top:35.13px;font-size:8.5px;line-height:10px;letter-spacing:0;font-family:'Liberation Serif',serif;font-weight:bold;color:#000;transform-origin:0 0;transform:scaleX(1.0140);white-space:pre;">Всего за 10.09.2016</div>
<div class="t" style="left:356.77px;top:35.13px;font-size:8.5px;line-height:10px;letter-spacing:0;font-family:'Liberation Serif',serif;font-weight:bold;color:#000;transform-origin:0 0;transform:scaleX(1.0120);white-space:pre;">1738,1</div>
<div class="vl" style="left:339px;top:33px;height:13px;background:#1a1a1a"></div>
<div class="vl" style="left:400px;top:33px;height:13px;background:#1a1a1a"></div>
<div class="hl" style="left:237px;top:45px;width:483px;background:#1a1a1a"></div>
<div class="gr" style="left:237px;top:46px;width:482px;height:21px"></div>
<div class="t" style="left:248.12px;top:51.13px;font-size:8.5px;line-height:10px;letter-spacing:0;font-family:'Liberation Serif',serif;color:#1c1c1c;transform-origin:0 0;transform:scaleX(0.9780);white-space:pre;">1</div>
<div class="t" style="left:271.70px;top:51.13px;font-size:8.5px;line-height:10px;letter-spacing:0;font-family:'Liberation Serif',serif;color:#1c1c1c;transform-origin:0 0;transform:scaleX(0.9776);white-space:pre;">12.09.2016 09:31</div>
<div class="t" style="left:359.85px;top:51.13px;font-size:8.5px;line-height:10px;letter-spacing:0;font-family:'Liberation Serif',serif;color:#1c1c1c;transform-origin:0 0;transform:scaleX(0.9780);white-space:pre;">715,6</div>
<div class="t" style="left:401.50px;top:45.13px;font-size:8.5px;line-height:10px;letter-spacing:0;font-family:'Liberation Serif',serif;color:#1c1c1c;transform-origin:0 0;transform:scaleX(0.9885);white-space:pre;">Шахты — Владимировская — М4  «Дон»,  Владимировское сельское  поселение,</div>
<div class="t" style="left:401.50px;top:55.13px;font-size:8.5px;line-height:10px;letter-spacing:0;font-family:'Liberation Serif',serif;color:#1c1c1c;transform-origin:0 0;transform:scaleX(0.9417);white-space:pre;">Красносулинский район,  РОС</div>
<div class="vl" style="left:263px;top:45px;height:23px;background:#1a1a1a"></div>
<div class="vl" style="left:339px;top:45px;height:23px;background:#1a1a1a"></div>
<div class="vl" style="left:400px;top:45px;height:23px;background:#1a1a1a"></div>
<div class="hl" style="left:237px;top:67px;width:483px;background:#1a1a1a"></div>
<div class="t" style="left:265.82px;top:69.13px;font-size:8.5px;line-height:10px;letter-spacing:0;font-family:'Liberation Serif',serif;font-weight:bold;color:#000;transform-origin:0 0;transform:scaleX(1.0140);white-space:pre;">Всего за 12.09.2016</div>
<div class="t" style="left:358.92px;top:69.13px;font-size:8.5px;line-height:10px;letter-spacing:0;font-family:'Liberation Serif',serif;font-weight:bold;color:#000;transform-origin:0 0;transform:scaleX(1.0120);white-space:pre;">715,6</div>
<div class="vl" style="left:339px;top:67px;height:13px;background:#1a1a1a"></div>
<div class="vl" style="left:400px;top:67px;height:13px;background:#1a1a1a"></div>
<div class="hl" style="left:237px;top:79px;width:483px;background:#1a1a1a"></div>
<div class="t" style="left:248.12px;top:81.13px;font-size:8.5px;line-height:10px;letter-spacing:0;font-family:'Liberation Serif',serif;color:#1c1c1c;transform-origin:0 0;transform:scaleX(0.9780);white-space:pre;">1</div>
<div class="t" style="left:271.70px;top:81.13px;font-size:8.5px;line-height:10px;letter-spacing:0;font-family:'Liberation Serif',serif;color:#1c1c1c;transform-origin:0 0;transform:scaleX(0.9776);white-space:pre;">13.09.2016 09:13</div>
<div class="t" style="left:359.85px;top:81.13px;font-size:8.5px;line-height:10px;letter-spacing:0;font-family:'Liberation Serif',serif;color:#1c1c1c;transform-origin:0 0;transform:scaleX(0.9780);white-space:pre;">586,2</div>
<div class="t" style="left:401.50px;top:81.13px;font-size:8.5px;line-height:10px;letter-spacing:0;font-family:'Liberation Serif',serif;color:#1c1c1c;transform-origin:0 0;transform:scaleX(0.9861);white-space:pre;">«Дон»,  Пролетарское сельское поселение,  Красносулинский район,  РОС</div>
<div class="vl" style="left:263px;top:79px;height:14px;background:#1a1a1a"></div>
<div class="vl" style="left:339px;top:79px;height:14px;background:#1a1a1a"></div>
<div class="vl" style="left:400px;top:79px;height:14px;background:#1a1a1a"></div>
<div class="hl" style="left:237px;top:92px;width:483px;background:#1a1a1a"></div>
<div class="gr" style="left:237px;top:93px;width:482px;height:12px"></div>
<div class="t" style="left:248.12px;top:94.13px;font-size:8.5px;line-height:10px;letter-spacing:0;font-family:'Liberation Serif',serif;color:#1c1c1c;transform-origin:0 0;transform:scaleX(0.9780);white-space:pre;">2</div>
<div class="t" style="left:271.70px;top:94.13px;font-size:8.5px;line-height:10px;letter-spacing:0;font-family:'Liberation Serif',serif;color:#1c1c1c;transform-origin:0 0;transform:scaleX(0.9776);white-space:pre;">13.09.2016 09:40</div>
<div class="t" style="left:359.85px;top:94.13px;font-size:8.5px;line-height:10px;letter-spacing:0;font-family:'Liberation Serif',serif;color:#1c1c1c;transform-origin:0 0;transform:scaleX(0.9780);white-space:pre;">221,3</div>
<div class="t" style="left:401.50px;top:94.13px;font-size:8.5px;line-height:10px;letter-spacing:0;font-family:'Liberation Serif',serif;color:#1c1c1c;transform-origin:0 0;transform:scaleX(0.9861);white-space:pre;">«Дон»,  Пролетарское сельское поселение,  Красносулинский район,  РОС</div>
<div class="vl" style="left:263px;top:92px;height:14px;background:#1a1a1a"></div>
<div class="vl" style="left:339px;top:92px;height:14px;background:#1a1a1a"></div>
<div class="vl" style="left:400px;top:92px;height:14px;background:#1a1a1a"></div>
<div class="hl" style="left:237px;top:105px;width:483px;background:#1a1a1a"></div>
<div class="t" style="left:248.12px;top:106.13px;font-size:8.5px;line-height:10px;letter-spacing:0;font-family:'Liberation Serif',serif;color:#1c1c1c;transform-origin:0 0;transform:scaleX(0.9780);white-space:pre;">3</div>
<div class="t" style="left:271.70px;top:106.13px;font-size:8.5px;line-height:10px;letter-spacing:0;font-family:'Liberation Serif',serif;color:#1c1c1c;transform-origin:0 0;transform:scaleX(0.9776);white-space:pre;">13.09.2016 09:50</div>
<div class="t" style="left:359.85px;top:106.13px;font-size:8.5px;line-height:10px;letter-spacing:0;font-family:'Liberation Serif',serif;color:#1c1c1c;transform-origin:0 0;transform:scaleX(0.9780);white-space:pre;">231,2</div>
<div class="t" style="left:401.50px;top:106.13px;font-size:8.5px;line-height:10px;letter-spacing:0;font-family:'Liberation Serif',serif;color:#1c1c1c;transform-origin:0 0;transform:scaleX(0.9861);white-space:pre;">«Дон»,  Пролетарское сельское поселение,  Красносулинский район,  РОС</div>
<div class="vl" style="left:263px;top:105px;height:13px;background:#1a1a1a"></div>
<div class="vl" style="left:339px;top:105px;height:13px;background:#1a1a1a"></div>
<div class="vl" style="left:400px;top:105px;height:13px;background:#1a1a1a"></div>
<div class="hl" style="left:237px;top:117px;width:483px;background:#1a1a1a"></div>
<div class="t" style="left:265.82px;top:120.13px;font-size:8.5px;line-height:10px;letter-spacing:0;font-family:'Liberation Serif',serif;font-weight:bold;color:#000;transform-origin:0 0;transform:scaleX(1.0140);white-space:pre;">Всего за 13.09.2016</div>
<div class="t" style="left:356.77px;top:120.13px;font-size:8.5px;line-height:10px;letter-spacing:0;font-family:'Liberation Serif',serif;font-weight:bold;color:#000;transform-origin:0 0;transform:scaleX(1.0120);white-space:pre;">1038,7</div>
<div class="vl" style="left:339px;top:117px;height:14px;background:#1a1a1a"></div>
<div class="vl" style="left:400px;top:117px;height:14px;background:#1a1a1a"></div>
<div class="hl" style="left:237px;top:130px;width:483px;background:#1a1a1a"></div>
<div class="gr" style="left:237px;top:131px;width:482px;height:21px"></div>
<div class="t" style="left:248.12px;top:136.13px;font-size:8.5px;line-height:10px;letter-spacing:0;font-family:'Liberation Serif',serif;color:#1c1c1c;transform-origin:0 0;transform:scaleX(0.9780);white-space:pre;">1</div>
<div class="t" style="left:271.70px;top:136.13px;font-size:8.5px;line-height:10px;letter-spacing:0;font-family:'Liberation Serif',serif;color:#1c1c1c;transform-origin:0 0;transform:scaleX(0.9776);white-space:pre;">14.09.2016 09:19</div>
<div class="t" style="left:359.85px;top:136.13px;font-size:8.5px;line-height:10px;letter-spacing:0;font-family:'Liberation Serif',serif;color:#1c1c1c;transform-origin:0 0;transform:scaleX(0.9780);white-space:pre;">781,5</div>
<div class="t" style="left:401.50px;top:130.13px;font-size:8.5px;line-height:10px;letter-spacing:0;font-family:'Liberation Serif',serif;color:#1c1c1c;transform-origin:0 0;transform:scaleX(0.9885);white-space:pre;">Шахты — Владимировская — М4  «Дон»,  Владимировское сельское  поселение,</div>
<div class="t" style="left:401.50px;top:140.13px;font-size:8.5px;line-height:10px;letter-spacing:0;font-family:'Liberation Serif',serif;color:#1c1c1c;transform-origin:0 0;transform:scaleX(0.9417);white-space:pre;">Красносулинский район,  РОС</div>
<div class="vl" style="left:263px;top:130px;height:23px;background:#1a1a1a"></div>
<div class="vl" style="left:339px;top:130px;height:23px;background:#1a1a1a"></div>
<div class="vl" style="left:400px;top:130px;height:23px;background:#1a1a1a"></div>
<div class="hl" style="left:237px;top:152px;width:483px;background:#1a1a1a"></div>
<div class="t" style="left:265.82px;top:154.13px;font-size:8.5px;line-height:10px;letter-spacing:0;font-family:'Liberation Serif',serif;font-weight:bold;color:#000;transform-origin:0 0;transform:scaleX(1.0140);white-space:pre;">Всего за 14.09.2016</div>
<div class="t" style="left:358.92px;top:154.13px;font-size:8.5px;line-height:10px;letter-spacing:0;font-family:'Liberation Serif',serif;font-weight:bold;color:#000;transform-origin:0 0;transform:scaleX(1.0120);white-space:pre;">781,5</div>
<div class="vl" style="left:339px;top:152px;height:14px;background:#1a1a1a"></div>
<div class="vl" style="left:400px;top:152px;height:14px;background:#1a1a1a"></div>
<div class="hl" style="left:237px;top:165px;width:483px;background:#1a1a1a"></div>
<div class="t" style="left:248.12px;top:170.13px;font-size:8.5px;line-height:10px;letter-spacing:0;font-family:'Liberation Serif',serif;color:#1c1c1c;transform-origin:0 0;transform:scaleX(0.9780);white-space:pre;">1</div>
<div class="t" style="left:271.70px;top:170.13px;font-size:8.5px;line-height:10px;letter-spacing:0;font-family:'Liberation Serif',serif;color:#1c1c1c;transform-origin:0 0;transform:scaleX(0.9776);white-space:pre;">20.09.2016 08:23</div>
<div class="t" style="left:356.73px;top:170.13px;font-size:8.5px;line-height:10px;letter-spacing:0;font-family:'Liberation Serif',serif;color:#1c1c1c;transform-origin:0 0;transform:scaleX(0.9780);white-space:pre;">2 073,2</div>
<div class="t" style="left:401.50px;top:164.13px;font-size:8.5px;line-height:10px;letter-spacing:0;font-family:'Liberation Serif',serif;color:#1c1c1c;transform-origin:0 0;transform:scaleX(0.9885);white-space:pre;">Шахты — Владимировская — М4  «Дон»,  Владимировское сельское  поселение,</div>
<div class="t" style="left:401.50px;top:174.13px;font-size:8.5px;line-height:10px;letter-spacing:0;font-family:'Liberation Serif',serif;color:#1c1c1c;transform-origin:0 0;transform:scaleX(0.9417);white-space:pre;">Красносулинский район,  РОС</div>
<div class="vl" style="left:263px;top:165px;height:22px;background:#1a1a1a"></div>
<div class="vl" style="left:339px;top:165px;height:22px;background:#1a1a1a"></div>
<div class="vl" style="left:400px;top:165px;height:22px;background:#1a1a1a"></div>
<div class="hl" style="left:237px;top:186px;width:483px;background:#1a1a1a"></div>
<div class="gr" style="left:237px;top:187px;width:482px;height:20px"></div>
<div class="t" style="left:248.12px;top:192.13px;font-size:8.5px;line-height:10px;letter-spacing:0;font-family:'Liberation Serif',serif;color:#1c1c1c;transform-origin:0 0;transform:scaleX(0.9780);white-space:pre;">2</div>
<div class="t" style="left:271.70px;top:192.13px;font-size:8.5px;line-height:10px;letter-spacing:0;font-family:'Liberation Serif',serif;color:#1c1c1c;transform-origin:0 0;transform:scaleX(0.9776);white-space:pre;">20.09.2016 09:41</div>
<div class="t" style="left:359.85px;top:192.13px;font-size:8.5px;line-height:10px;letter-spacing:0;font-family:'Liberation Serif',serif;color:#1c1c1c;transform-origin:0 0;transform:scaleX(0.9780);white-space:pre;">545,6</div>
<div class="t" style="left:401.50px;top:186.13px;font-size:8.5px;line-height:10px;letter-spacing:0;font-family:'Liberation Serif',serif;color:#1c1c1c;transform-origin:0 0;transform:scaleX(0.9885);white-space:pre;">Шахты — Владимировская — М4  «Дон»,  Владимировское сельское  поселение,</div>
<div class="t" style="left:401.50px;top:195.13px;font-size:8.5px;line-height:10px;letter-spacing:0;font-family:'Liberation Serif',serif;color:#1c1c1c;transform-origin:0 0;transform:scaleX(0.9417);white-space:pre;">Красносулинский район,  РОС</div>
<div class="vl" style="left:263px;top:186px;height:22px;background:#1a1a1a"></div>
<div class="vl" style="left:339px;top:186px;height:22px;background:#1a1a1a"></div>
<div class="vl" style="left:400px;top:186px;height:22px;background:#1a1a1a"></div>
<div class="hl" style="left:237px;top:207px;width:483px;background:#1a1a1a"></div>
<div class="t" style="left:265.82px;top:210.13px;font-size:8.5px;line-height:10px;letter-spacing:0;font-family:'Liberation Serif',serif;font-weight:bold;color:#000;transform-origin:0 0;transform:scaleX(1.0140);white-space:pre;">Всего за 20.09.2016</div>
<div class="t" style="left:355.70px;top:210.13px;font-size:8.5px;line-height:10px;letter-spacing:0;font-family:'Liberation Serif',serif;font-weight:bold;color:#000;transform-origin:0 0;transform:scaleX(1.0120);white-space:pre;">2 618,8</div>
<div class="vl" style="left:339px;top:207px;height:14px;background:#1a1a1a"></div>
<div class="vl" style="left:400px;top:207px;height:14px;background:#1a1a1a"></div>
<div class="hl" style="left:237px;top:220px;width:483px;background:#1a1a1a"></div>
<div class="t" style="left:248.12px;top:226.13px;font-size:8.5px;line-height:10px;letter-spacing:0;font-family:'Liberation Serif',serif;color:#1c1c1c;transform-origin:0 0;transform:scaleX(0.9780);white-space:pre;">1</div>
<div class="t" style="left:271.70px;top:226.13px;font-size:8.5px;line-height:10px;letter-spacing:0;font-family:'Liberation Serif',serif;color:#1c1c1c;transform-origin:0 0;transform:scaleX(0.9776);white-space:pre;">21.09.2016 09:22</div>
<div class="t" style="left:359.85px;top:226.13px;font-size:8.5px;line-height:10px;letter-spacing:0;font-family:'Liberation Serif',serif;color:#1c1c1c;transform-origin:0 0;transform:scaleX(0.9780);white-space:pre;">312,4</div>
<div class="t" style="left:401.50px;top:220.13px;font-size:8.5px;line-height:10px;letter-spacing:0;font-family:'Liberation Serif',serif;color:#1c1c1c;transform-origin:0 0;transform:scaleX(0.9885);white-space:pre;">Шахты — Владимировская — М4  «Дон»,  Владимировское сельское  поселение,</div>
<div class="t" style="left:401.50px;top:229.13px;font-size:8.5px;line-height:10px;letter-spacing:0;font-family:'Liberation Serif',serif;color:#1c1c1c;transform-origin:0 0;transform:scaleX(0.9417);white-space:pre;">Красносулинский район,  РОС</div>
<div class="vl" style="left:263px;top:220px;height:22px;background:#1a1a1a"></div>
<div class="vl" style="left:339px;top:220px;height:22px;background:#1a1a1a"></div>
<div class="vl" style="left:400px;top:220px;height:22px;background:#1a1a1a"></div>
<div class="hl" style="left:237px;top:241px;width:483px;background:#1a1a1a"></div>
<div class="gr" style="left:237px;top:242px;width:482px;height:21px"></div>
<div class="t" style="left:248.12px;top:247.13px;font-size:8.5px;line-height:10px;letter-spacing:0;font-family:'Liberation Serif',serif;color:#1c1c1c;transform-origin:0 0;transform:scaleX(0.9780);white-space:pre;">2</div>
<div class="t" style="left:271.70px;top:247.13px;font-size:8.5px;line-height:10px;letter-spacing:0;font-family:'Liberation Serif',serif;color:#1c1c1c;transform-origin:0 0;transform:scaleX(0.9776);white-space:pre;">21.09.2016 09:58</div>
<div class="t" style="left:359.85px;top:247.13px;font-size:8.5px;line-height:10px;letter-spacing:0;font-family:'Liberation Serif',serif;color:#1c1c1c;transform-origin:0 0;transform:scaleX(0.9780);white-space:pre;">316,7</div>
<div class="t" style="left:401.50px;top:241.13px;font-size:8.5px;line-height:10px;letter-spacing:0;font-family:'Liberation Serif',serif;color:#1c1c1c;transform-origin:0 0;transform:scaleX(0.9885);white-space:pre;">Шахты — Владимировская — М4  «Дон»,  Владимировское сельское  поселение,</div>
<div class="t" style="left:401.50px;top:250.13px;font-size:8.5px;line-height:10px;letter-spacing:0;font-family:'Liberation Serif',serif;color:#1c1c1c;transform-origin:0 0;transform:scaleX(0.9417);white-space:pre;">Красносулинский район,  РОС</div>
<div class="vl" style="left:263px;top:241px;height:23px;background:#1a1a1a"></div>
<div class="vl" style="left:339px;top:241px;height:23px;background:#1a1a1a"></div>
<div class="vl" style="left:400px;top:241px;height:23px;background:#1a1a1a"></div>
<div class="hl" style="left:237px;top:263px;width:483px;background:#1a1a1a"></div>
<div class="t" style="left:248.12px;top:264.13px;font-size:8.5px;line-height:10px;letter-spacing:0;font-family:'Liberation Serif',serif;color:#1c1c1c;transform-origin:0 0;transform:scaleX(0.9780);white-space:pre;">3</div>
<div class="t" style="left:271.70px;top:264.13px;font-size:8.5px;line-height:10px;letter-spacing:0;font-family:'Liberation Serif',serif;color:#1c1c1c;transform-origin:0 0;transform:scaleX(0.9776);white-space:pre;">21.09.2016 10:37</div>
<div class="t" style="left:359.85px;top:264.13px;font-size:8.5px;line-height:10px;letter-spacing:0;font-family:'Liberation Serif',serif;color:#1c1c1c;transform-origin:0 0;transform:scaleX(0.9780);white-space:pre;">532,9</div>
<div class="t" style="left:401.50px;top:264.13px;font-size:8.5px;line-height:10px;letter-spacing:0;font-family:'Liberation Serif',serif;color:#1c1c1c;transform-origin:0 0;transform:scaleX(0.9861);white-space:pre;">«Дон»,  Пролетарское сельское поселение,  Красносулинский район,  РОС</div>
<div class="vl" style="left:263px;top:263px;height:14px;background:#1a1a1a"></div>
<div class="vl" style="left:339px;top:263px;height:14px;background:#1a1a1a"></div>
<div class="vl" style="left:400px;top:263px;height:14px;background:#1a1a1a"></div>
<div class="hl" style="left:237px;top:276px;width:483px;background:#1a1a1a"></div>
<div class="gr" style="left:237px;top:277px;width:482px;height:12px"></div>
<div class="t" style="left:248.12px;top:277.13px;font-size:8.5px;line-height:10px;letter-spacing:0;font-family:'Liberation Serif',serif;color:#1c1c1c;transform-origin:0 0;transform:scaleX(0.9780);white-space:pre;">4</div>
<div class="t" style="left:271.70px;top:277.13px;font-size:8.5px;line-height:10px;letter-spacing:0;font-family:'Liberation Serif',serif;color:#1c1c1c;transform-origin:0 0;transform:scaleX(0.9828);white-space:pre;">21.09.2016 11:01</div>
<div class="t" style="left:359.85px;top:277.13px;font-size:8.5px;line-height:10px;letter-spacing:0;font-family:'Liberation Serif',serif;color:#1c1c1c;transform-origin:0 0;transform:scaleX(0.9780);white-space:pre;">291,9</div>
<div class="t" style="left:401.50px;top:277.13px;font-size:8.5px;line-height:10px;letter-spacing:0;font-family:'Liberation Serif',serif;color:#1c1c1c;transform-origin:0 0;transform:scaleX(0.9861);white-space:pre;">«Дон»,  Пролетарское сельское поселение,  Красносулинский район,  РОС</div>
<div class="vl" style="left:263px;top:276px;height:14px;background:#1a1a1a"></div>
<div class="vl" style="left:339px;top:276px;height:14px;background:#1a1a1a"></div>
<div class="vl" style="left:400px;top:276px;height:14px;background:#1a1a1a"></div>
<div class="hl" style="left:237px;top:289px;width:483px;background:#1a1a1a"></div>
<div class="t" style="left:265.82px;top:290.13px;font-size:8.5px;line-height:10px;letter-spacing:0;font-family:'Liberation Serif',serif;font-weight:bold;color:#000;transform-origin:0 0;transform:scaleX(1.0140);white-space:pre;">Всего за 21.09.2016</div>
<div class="t" style="left:356.77px;top:290.13px;font-size:8.5px;line-height:10px;letter-spacing:0;font-family:'Liberation Serif',serif;font-weight:bold;color:#000;transform-origin:0 0;transform:scaleX(1.0120);white-space:pre;">1453,9</div>
<div class="vl" style="left:339px;top:289px;height:13px;background:#1a1a1a"></div>
<div class="vl" style="left:400px;top:289px;height:13px;background:#1a1a1a"></div>
<div class="hl" style="left:237px;top:301px;width:483px;background:#1a1a1a"></div>
<div class="hl" style="left:237px;top:92px;width:483px;background:#777"></div>
<div class="vl" style="left:237px;top:-14px;height:316px;background:#1a1a1a"></div>
<div class="vl" style="left:719px;top:-14px;height:316px;background:#777"></div>
<div class="gh" style="left:237px;top:390px;width:482px;height:13px"></div>
<div class="hl" style="left:237px;top:390px;width:483px;background:#1a1a1a"></div>
<div class="t" style="left:246.45px;top:392.13px;font-size:8.5px;line-height:10px;letter-spacing:0;font-family:'Liberation Serif',serif;font-weight:bold;color:#000;transform-origin:0 0;transform:scaleX(0.9717);white-space:pre;">№</div>
<div class="t" style="left:291.10px;top:392.13px;font-size:8.5px;line-height:10px;letter-spacing:0;font-family:'Liberation Serif',serif;font-weight:bold;color:#000;transform-origin:0 0;transform:scaleX(1.0105);white-space:pre;">Дата</div>
<div class="t" style="left:354.89px;top:392.13px;font-size:8.5px;line-height:10px;letter-spacing:0;font-family:'Liberation Serif',serif;font-weight:bold;color:#000;transform-origin:0 0;transform:scaleX(1.0120);white-space:pre;">Литров</div>
<div class="t" style="left:547.42px;top:392.13px;font-size:8.5px;line-height:10px;letter-spacing:0;font-family:'Liberation Serif',serif;font-weight:bold;color:#000;transform-origin:0 0;transform:scaleX(1.0120);white-space:pre;">Место</div>
<div class="vl" style="left:237px;top:390px;height:14px;background:#1a1a1a"></div>
<div class="vl" style="left:263px;top:390px;height:14px;background:#1a1a1a"></div>
<div class="vl" style="left:339px;top:390px;height:14px;background:#1a1a1a"></div>
<div class="vl" style="left:400px;top:390px;height:14px;background:#1a1a1a"></div>
<div class="vl" style="left:719px;top:390px;height:14px;background:#1a1a1a"></div>
<div class="hl" style="left:237px;top:403px;width:483px;background:#1a1a1a"></div>
<div class="t" style="left:248.12px;top:404.13px;font-size:8.5px;line-height:10px;letter-spacing:0;font-family:'Liberation Serif',serif;color:#1c1c1c;transform-origin:0 0;transform:scaleX(0.9780);white-space:pre;">1</div>
<div class="t" style="left:271.70px;top:404.13px;font-size:8.5px;line-height:10px;letter-spacing:0;font-family:'Liberation Serif',serif;color:#1c1c1c;transform-origin:0 0;transform:scaleX(0.9776);white-space:pre;">28.09.2016 12:24</div>
<div class="t" style="left:361.93px;top:404.13px;font-size:8.5px;line-height:10px;letter-spacing:0;font-family:'Liberation Serif',serif;color:#1c1c1c;transform-origin:0 0;transform:scaleX(0.9780);white-space:pre;">79,4</div>
<div class="t" style="left:401.50px;top:404.13px;font-size:8.5px;line-height:10px;letter-spacing:0;font-family:'Liberation Serif',serif;color:#1c1c1c;transform-origin:0 0;transform:scaleX(0.9780);white-space:pre;">База</div>
<div class="vl" style="left:263px;top:403px;height:14px;background:#1a1a1a"></div>
<div class="vl" style="left:339px;top:403px;height:14px;background:#1a1a1a"></div>
<div class="vl" style="left:400px;top:403px;height:14px;background:#1a1a1a"></div>
<div class="hl" style="left:237px;top:416px;width:483px;background:#1a1a1a"></div>
<div class="t" style="left:265.82px;top:418.13px;font-size:8.5px;line-height:10px;letter-spacing:0;font-family:'Liberation Serif',serif;font-weight:bold;color:#000;transform-origin:0 0;transform:scaleX(1.0140);white-space:pre;">Всего за 28.09.2016</div>
<div class="t" style="left:361.07px;top:418.13px;font-size:8.5px;line-height:10px;letter-spacing:0;font-family:'Liberation Serif',serif;font-weight:bold;color:#000;transform-origin:0 0;transform:scaleX(1.0120);white-space:pre;">79,4</div>
<div class="vl" style="left:339px;top:416px;height:14px;background:#1a1a1a"></div>
<div class="vl" style="left:400px;top:416px;height:14px;background:#1a1a1a"></div>
<div class="hl" style="left:237px;top:429px;width:483px;background:#1a1a1a"></div>
<div class="vl" style="left:237px;top:390px;height:40px;background:#1a1a1a"></div>
<div class="vl" style="left:719px;top:390px;height:40px;background:#555"></div>
<div class="gh" style="left:237px;top:441px;width:482px;height:25px"></div>
<div class="hl" style="left:237px;top:441px;width:483px;background:#1a1a1a"></div>
<div class="hl" style="left:237px;top:454px;width:398px;background:#1a1a1a"></div>
<div class="hl" style="left:237px;top:466px;width:483px;background:#1a1a1a"></div>
<div class="hl" style="left:237px;top:479px;width:483px;background:#555"></div>
<div class="vl" style="left:237px;top:441px;height:39px;background:#1a1a1a"></div>
<div class="vl" style="left:719px;top:441px;height:39px;background:#555"></div>
<div class="vl" style="left:481px;top:441px;height:39px;background:#1a1a1a"></div>
<div class="vl" style="left:634px;top:441px;height:39px;background:#1a1a1a"></div>
<div class="vl" style="left:318px;top:454px;height:26px;background:#1a1a1a"></div>
<div class="vl" style="left:400px;top:454px;height:26px;background:#1a1a1a"></div>
<div class="vl" style="left:557px;top:454px;height:26px;background:#1a1a1a"></div>
<div class="t" style="left:339.50px;top:444.13px;font-size:8.5px;line-height:10px;letter-spacing:0;font-family:'Liberation Serif',serif;font-weight:bold;color:#000;transform-origin:0 0;transform:scaleX(1.0511);white-space:pre;">Цистерна</div>
<div class="t" style="left:524.20px;top:444.13px;font-size:8.5px;line-height:10px;letter-spacing:0;font-family:'Liberation Serif',serif;font-weight:bold;color:#000;transform-origin:0 0;transform:scaleX(0.9944);white-space:pre;">Топлив ораздача</div>
<div class="t" style="left:242.10px;top:455.13px;font-size:8.5px;line-height:10px;letter-spacing:0;font-family:'Liberation Serif',serif;font-weight:bold;color:#000;transform-origin:0 0;transform:scaleX(1.0360);white-space:pre;">Начальный объём</div>
<div class="t" style="left:325.60px;top:455.13px;font-size:8.5px;line-height:10px;letter-spacing:0;font-family:'Liberation Serif',serif;font-weight:bold;color:#000;transform-origin:0 0;transform:scaleX(1.0464);white-space:pre;">Конечный объём</div>
<div class="t" style="left:404.90px;top:455.13px;font-size:8.5px;line-height:10px;letter-spacing:0;font-family:'Liberation Serif',serif;font-weight:bold;color:#000;transform-origin:0 0;transform:scaleX(1.0178);white-space:pre;">Принято топлива</div>
<div class="t" style="left:506.90px;top:455.13px;font-size:8.5px;line-height:10px;letter-spacing:0;font-family:'Liberation Serif',serif;font-weight:bold;color:#000;transform-origin:0 0;transform:scaleX(1.0072);white-space:pre;">Число</div>
<div class="t" style="left:582.60px;top:455.13px;font-size:8.5px;line-height:10px;letter-spacing:0;font-family:'Liberation Serif',serif;font-weight:bold;color:#000;transform-origin:0 0;transform:scaleX(1.0092);white-space:pre;">Объём</div>
<div class="t" style="left:637.80px;top:444.13px;font-size:8.5px;line-height:10px;letter-spacing:0;font-family:'Liberation Serif',serif;font-weight:bold;color:#000;transform-origin:0 0;transform:scaleX(1.0302);white-space:pre;">Разница показаний</div>
<div class="t" style="left:638.70px;top:454.13px;font-size:8.5px;line-height:10px;letter-spacing:0;font-family:'Liberation Serif',serif;font-weight:bold;color:#000;transform-origin:0 0;transform:scaleX(1.0315);white-space:pre;">расходомера и LLS</div>
<div class="t" style="left:269.80px;top:467.13px;font-size:8.5px;line-height:10px;letter-spacing:0;font-family:'Liberation Serif',serif;color:#1c1c1c;transform-origin:0 0;transform:scaleX(0.8941);white-space:pre;">3069</div>
<div class="t" style="left:350.60px;top:467.13px;font-size:8.5px;line-height:10px;letter-spacing:0;font-family:'Liberation Serif',serif;color:#1c1c1c;transform-origin:0 0;transform:scaleX(0.9118);white-space:pre;">1531</div>
<div class="t" style="left:430.10px;top:467.13px;font-size:8.5px;line-height:10px;letter-spacing:0;font-family:'Liberation Serif',serif;color:#1c1c1c;transform-origin:0 0;transform:scaleX(0.9271);white-space:pre;">16413</div>
<div class="t" style="left:515.10px;top:467.13px;font-size:8.5px;line-height:10px;letter-spacing:0;font-family:'Liberation Serif',serif;color:#1c1c1c;transform-origin:0 0;transform:scaleX(0.8000);white-space:pre;">31</div>
<div class="t" style="left:584.90px;top:467.13px;font-size:8.5px;line-height:10px;letter-spacing:0;font-family:'Liberation Serif',serif;color:#1c1c1c;transform-origin:0 0;transform:scaleX(0.9412);white-space:pre;">17663</div>
<div class="t" style="left:670.00px;top:467.13px;font-size:8.5px;line-height:10px;letter-spacing:0;font-family:'Liberation Serif',serif;color:#1c1c1c;transform-origin:0 0;transform:scaleX(0.9255);white-space:pre;">289</div>
</div>
<div class="a" style="left:347px;top:329px;width:398px;height:50px;background:#fff"></div>
<div class="wmc" style="left:359.80px;top:330.79px;transform:scale(1.076,1.154);text-shadow:1.39px 1.37px 0 #000">©</div>
<div class="wmc" style="left:411.90px;top:328.28px;transform:scale(0.972,1.240);text-shadow:1.54px 1.37px 0 #000">w</div>
<div class="wmc" style="left:444.50px;top:328.28px;transform:scale(0.980,1.240);text-shadow:1.53px 1.37px 0 #000">w</div>
<div class="wmc" style="left:478.70px;top:328.28px;transform:scale(0.984,1.240);text-shadow:1.52px 1.37px 0 #000">w</div>
<div class="wmc" style="left:515.20px;top:328.28px;transform:scale(0.562,1.240);text-shadow:2.67px 1.37px 0 #000">.</div>
<div class="wmc" style="left:526.80px;top:328.28px;transform:scale(1.022,1.240);text-shadow:1.47px 1.37px 0 #000">s</div>
<div class="wmc" style="left:556.00px;top:328.28px;transform:scale(0.584,1.240);text-shadow:2.57px 1.37px 0 #000">i</div>
<div class="wmc" style="left:572.60px;top:328.28px;transform:scale(0.896,1.240);text-shadow:1.67px 1.37px 0 #000">r</div>
<div class="wmc" style="left:592.00px;top:328.28px;transform:scale(0.584,1.240);text-shadow:2.57px 1.37px 0 #000">i</div>
<div class="wmc" style="left:608.60px;top:328.28px;transform:scale(0.800,1.240);text-shadow:1.87px 1.37px 0 #000">u</div>
<div class="wmc" style="left:634.60px;top:328.28px;transform:scale(0.978,1.240);text-shadow:1.53px 1.37px 0 #000">s</div>
<div class="wmc" style="left:662.60px;top:328.28px;transform:scale(0.562,1.240);text-shadow:2.67px 1.37px 0 #000">.</div>
<div class="wmc" style="left:676.80px;top:328.28px;transform:scale(1.022,1.240);text-shadow:1.47px 1.37px 0 #000">s</div>
<div class="wmc" style="left:706.60px;top:328.28px;transform:scale(0.800,1.240);text-shadow:1.87px 1.37px 0 #000">u</div>
<div class="a" style="left:362px;top:365px;width:362px;height:1px;background:#000"></div>
<div class="a" id="nav"></div>
<div class="a" style="left:258px;top:672px;width:160px;height:18px;border:1px solid #9bb6dc;border-radius:2px;background:linear-gradient(#e3effe,#c7dcf8)"></div>
<div class="a" style="left:277px;top:673px;width:1px;height:16px;background:#b9cdea"></div><div class="a" style="left:278px;top:673px;width:1px;height:16px;background:#deeafb"></div>
<div class="a" style="left:297px;top:673px;width:1px;height:16px;background:#b9cdea"></div><div class="a" style="left:298px;top:673px;width:1px;height:16px;background:#deeafb"></div>
<div class="a" style="left:379px;top:673px;width:1px;height:16px;background:#b9cdea"></div><div class="a" style="left:380px;top:673px;width:1px;height:16px;background:#deeafb"></div>
<div class="a" style="left:399px;top:673px;width:1px;height:16px;background:#b9cdea"></div><div class="a" style="left:400px;top:673px;width:1px;height:16px;background:#deeafb"></div>
<svg style="left:258px;top:672px" width="160" height="18" viewBox="258 672 160 18"><rect x="263.800" y="676.600" width="1.600" height="8.200" fill="#a9b7cc"/><path d="M270.800 676.600v8.200l-4.800-4.100z" fill="#a9b7cc"/><path d="M289.800 676.600v8.200l-4.800-4.100z" fill="#a9b7cc"/><path d="M386 676.600l4.800 4.100-4.800 4.100z" fill="#2f79d8"/><path d="M404.500 676.600l4.800 4.100-4.800 4.100z" fill="#2f79d8"/><rect x="409.800" y="676.600" width="1.600" height="8.200" fill="#1b57ad"/></svg>
<div class="a" style="left:257px;top:667px;width:1px;height:24px;background:#97979c"></div>
<div class="t" style="left:302.80px;top:675.03px;font-size:9px;line-height:12px;letter-spacing:0;color:#15428b;transform-origin:0 0;transform:scaleX(1.0421);">Страница 1 из 2</div>
</body></html>
